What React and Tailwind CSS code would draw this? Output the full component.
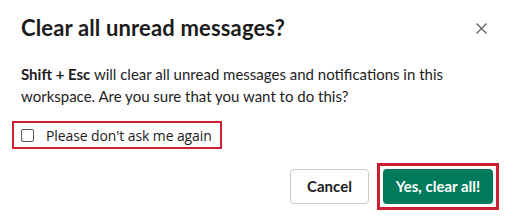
export default function App() {
  return (
    <div className="w-[512px] h-[222px] bg-white text-[#1d1c1d] font-['Lato',sans-serif] overflow-hidden">
      <div className="flex items-start justify-between pl-[21px] pr-[25px] pt-[14px]">
        <h1 className="text-[22px] leading-[28px] font-bold tracking-[0.15px]">Clear all unread messages?</h1>
        <button className="mt-[9px] w-[11px] h-[11px] text-[#616061]">
          <svg viewBox="0 0 11 11" width="11" height="11" fill="none" stroke="currentColor" strokeWidth="1.3">
            <path d="M0.5 0.5 L10.5 10.5 M10.5 0.5 L0.5 10.5" />
          </svg>
        </button>
      </div>
      <p className="pl-[21px] pr-[40px] mt-[21px] text-[15px] leading-[22px]">
        <span className="font-bold">Shift + Esc</span> will clear all unread messages and notifications in this workspace. Are you sure that you want to do this?
      </p>
      <div className="pl-[12px] mt-[14px]">
        <label className="inline-flex items-center border-2 border-[#cc1f2f] h-[28px] w-[210px] pl-[7px] font-['Open_Sans',sans-serif] text-[14px] text-[#1d1c1d] whitespace-nowrap">
          <span className="w-[13px] h-[13px] border border-[#555] rounded-[2px] bg-white shrink-0"></span>
          <span className="ml-[12px] tracking-[-0.1px]">Please don't ask me again</span>
        </label>
      </div>
      <div className="flex justify-end items-center pr-[13px] mt-[14px] gap-[8px]">
        <button className="h-[35px] w-[79px] border border-[#c9c9c9] rounded-[4px] bg-white text-[15px] font-bold text-[#1d1c1d]">
          Cancel
        </button>
        <div className="border-[3px] border-[#cc1f2f] p-[3px]">
          <button className="h-[35px] w-[110px] rounded-[4px] bg-[#007a5a] text-white text-[15px] font-bold block">
            Yes, clear all!
          </button>
        </div>
      </div>
    </div>
  );
}
